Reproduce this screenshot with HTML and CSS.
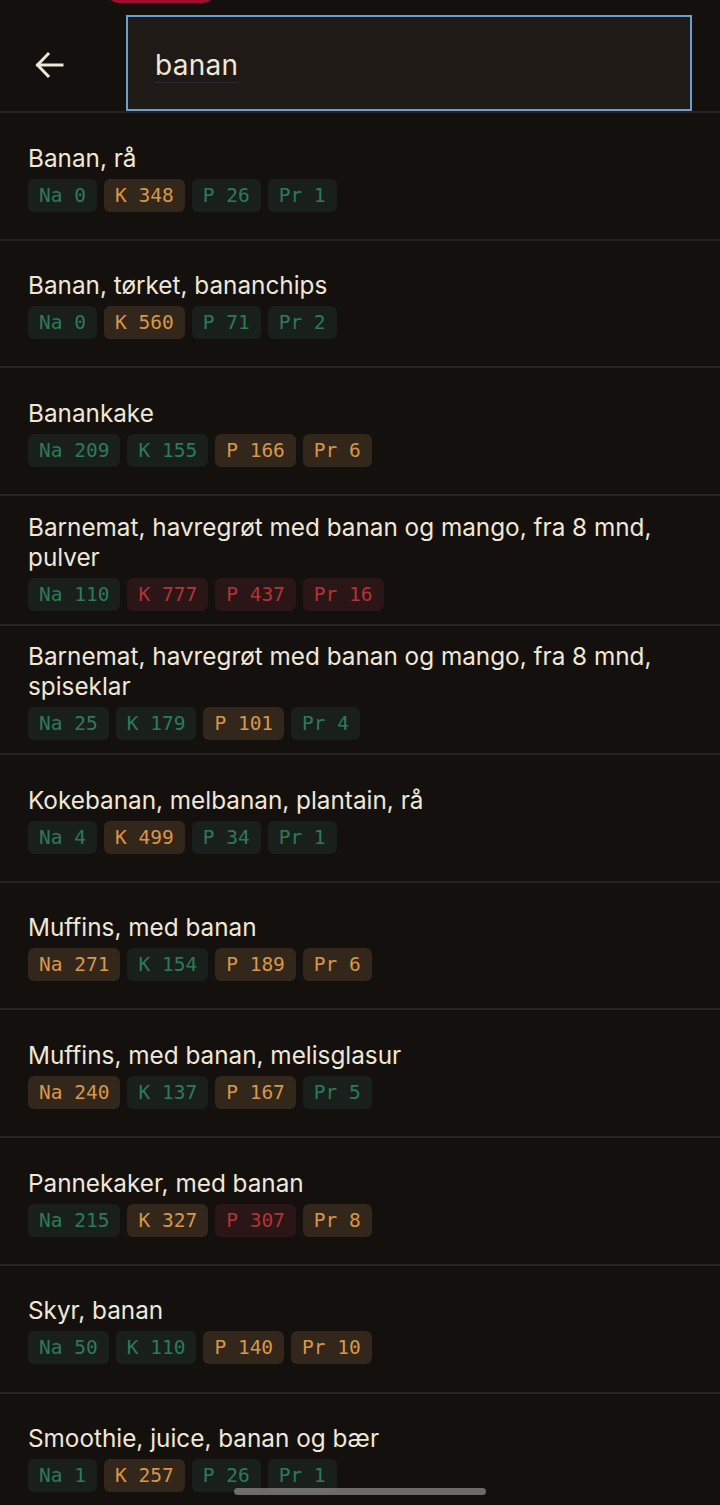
FILE: index.html
```html
<!DOCTYPE html>
<html lang="no">
<head>
<meta charset="utf-8">
<title>Søk</title>
<link rel="stylesheet" href="styles.css">
</head>
<body>
<div class="toast"></div>
<header class="header">
  <button class="back" aria-label="Tilbake">
    <svg width="32" height="32" viewBox="0 0 32 32" fill="none" stroke="#efe7d8" stroke-width="3" stroke-linecap="square">
      <path d="M29 16H5"/>
      <path d="M15 5L4.5 16L15 27"/>
    </svg>
  </button>
  <div class="search"><span class="query">banan</span></div>
</header>
<main class="list">
  <div class="row">
    <div class="title">Banan, rå</div>
    <div class="chips"><span class="chip g">Na 0</span><span class="chip o">K 348</span><span class="chip g">P 26</span><span class="chip g">Pr 1</span></div>
  </div>
  <div class="row">
    <div class="title">Banan, tørket, bananchips</div>
    <div class="chips"><span class="chip g">Na 0</span><span class="chip o">K 560</span><span class="chip g">P 71</span><span class="chip g">Pr 2</span></div>
  </div>
  <div class="row">
    <div class="title">Banankake</div>
    <div class="chips"><span class="chip g">Na 209</span><span class="chip g">K 155</span><span class="chip o">P 166</span><span class="chip o">Pr 6</span></div>
  </div>
  <div class="row">
    <div class="title">Barnemat, havregrøt med banan og mango, fra 8 mnd, pulver</div>
    <div class="chips"><span class="chip g">Na 110</span><span class="chip r">K 777</span><span class="chip r">P 437</span><span class="chip r">Pr 16</span></div>
  </div>
  <div class="row">
    <div class="title">Barnemat, havregrøt med banan og mango, fra 8 mnd, spiseklar</div>
    <div class="chips"><span class="chip g">Na 25</span><span class="chip g">K 179</span><span class="chip o">P 101</span><span class="chip g">Pr 4</span></div>
  </div>
  <div class="row">
    <div class="title">Kokebanan, melbanan, plantain, rå</div>
    <div class="chips"><span class="chip g">Na 4</span><span class="chip o">K 499</span><span class="chip g">P 34</span><span class="chip g">Pr 1</span></div>
  </div>
  <div class="row">
    <div class="title">Muffins, med banan</div>
    <div class="chips"><span class="chip o">Na 271</span><span class="chip g">K 154</span><span class="chip o">P 189</span><span class="chip o">Pr 6</span></div>
  </div>
  <div class="row">
    <div class="title">Muffins, med banan, melisglasur</div>
    <div class="chips"><span class="chip o">Na 240</span><span class="chip g">K 137</span><span class="chip o">P 167</span><span class="chip g">Pr 5</span></div>
  </div>
  <div class="row">
    <div class="title">Pannekaker, med banan</div>
    <div class="chips"><span class="chip g">Na 215</span><span class="chip o">K 327</span><span class="chip r">P 307</span><span class="chip o">Pr 8</span></div>
  </div>
  <div class="row">
    <div class="title">Skyr, banan</div>
    <div class="chips"><span class="chip g">Na 50</span><span class="chip g">K 110</span><span class="chip o">P 140</span><span class="chip o">Pr 10</span></div>
  </div>
  <div class="row">
    <div class="title">Smoothie, juice, banan og bær</div>
    <div class="chips"><span class="chip g">Na 1</span><span class="chip o">K 257</span><span class="chip g">P 26</span><span class="chip g">Pr 1</span></div>
  </div>
</main>
<div class="home-indicator"></div>
</body>
</html>
```
FILE: styles.css
```css
* { box-sizing: border-box; }
html, body {
  margin: 0;
  padding: 0;
  background: #13100d;
}
body {
  font-family: Inter, "Noto Sans", sans-serif;
  color: #efe7d8;
  overflow: hidden;
  height: 1505px;
  position: relative;
}
.toast {
  position: absolute;
  top: -20px;
  left: 107px;
  width: 108px;
  height: 23px;
  border-radius: 12px;
  background: #a10d2c;
}
.header {
  display: flex;
  align-items: flex-start;
  height: 113px;
  border-bottom: 2px solid #28241e;
}
.back {
  width: 126px;
  height: 96px;
  margin-top: 17px;
  padding: 0 0 0 33px;
  background: none;
  border: 0;
  display: flex;
  align-items: center;
}
.search {
  width: 566px;
  height: 96px;
  margin-top: 15px;
  border: 2px solid #6b9fd3;
  background: #1f1a15;
  display: flex;
  align-items: center;
  padding: 4px 0 0 27px;
}
.query {
  font-size: 28px;
  letter-spacing: 0.3px;
  color: #efe7d8;
  border-bottom: 1px solid #2c2a35;
  line-height: 34px;
}
.row {
  min-height: 127.7px;
  padding: 15.5px 28px 13px;
  border-bottom: 2px solid #27231d;
  display: flex;
  flex-direction: column;
  justify-content: center;
  gap: 6px;
}
.title {
  font-size: 24.3px;
  line-height: 30px;
  color: #efe7d8;
}
.chips {
  display: flex;
  gap: 7px;
}
.chip {
  font-family: "DejaVu Sans Mono", monospace;
  font-size: 19.5px;
  height: 33px;
  line-height: 33px;
  padding: 0 11px;
  border-radius: 6px;
}
.chip.g { background: #19201b; color: #2e7a58; }
.chip.o { background: #33261a; color: #d8974a; }
.chip.r { background: #2a1616; color: #b43336; }
.home-indicator {
  position: absolute;
  left: 234px;
  top: 1488px;
  width: 252px;
  height: 7px;
  border-radius: 4px;
  background: rgba(140, 138, 134, 0.75);
}
```
